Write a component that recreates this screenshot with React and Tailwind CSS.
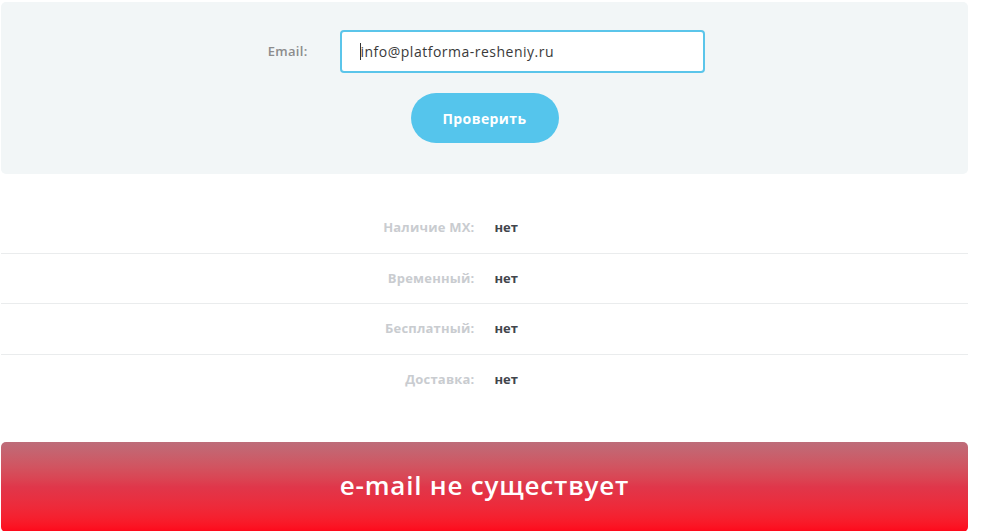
export default function App() {
  const rows = [
    ["Наличие MX:", "нет"],
    ["Временный:", "нет"],
    ["Бесплатный:", "нет"],
    ["Доставка:", "нет"],
  ];
  return (
    <div className="w-[987px] h-[531px] bg-white overflow-hidden pl-[1px] pt-[2px]" style={{ fontFamily: '"Open Sans", "Noto Sans", sans-serif' }}>
      <div className="w-[967px]">
        <div className="h-[172px] bg-[#f2f6f7] rounded-[5px] flex flex-col items-center pt-[28px]">
          <div className="flex items-center">
            <label className="w-[74px] text-[13px] font-semibold text-[#8c8c8c] text-right tracking-[0.3px]">Email:</label>
            <div className="ml-[32px] w-[365px] h-[43px] border-2 border-[#5bc5ea] rounded-[4px] bg-white flex items-center pl-[18px] text-[14px] text-[#3a3a3a] tracking-[0.5px]">
              <span className="w-[1px] h-[17px] bg-[#333]" />
              <span>info@platforma-resheniy.ru</span>
            </div>
            <div className="w-[31px]" />
          </div>
          <button className="mt-[20px] w-[148px] h-[50px] rounded-full bg-[#55c5ec] text-white text-[14px] font-bold tracking-[0.4px]">Проверить</button>
        </div>
        <div className="mt-[29px]">
          {rows.map(([k, v], i) => (
            <div key={k} className={`flex items-center h-[50.5px] ${i < rows.length - 1 ? "border-b border-[#eaeced]" : ""}`}>
              <div className="w-1/2 text-right pr-[10px] text-[13px] font-bold text-[#c9ccd0] tracking-[0.2px]">{k}</div>
              <div className="w-1/2 pl-[10px] text-[13px] font-bold text-[#41454c]">{v}</div>
            </div>
          ))}
        </div>
        <div className="mt-[37px] h-[90px] rounded-[5px] bg-gradient-to-b from-[#bd6c79] via-[#e0364a] to-[#ff0519] flex items-center justify-center">
          <span className="text-white text-[26px] font-semibold tracking-[0.8px] mt-[-3px]">e-mail не существует</span>
        </div>
      </div>
    </div>
  );
}
